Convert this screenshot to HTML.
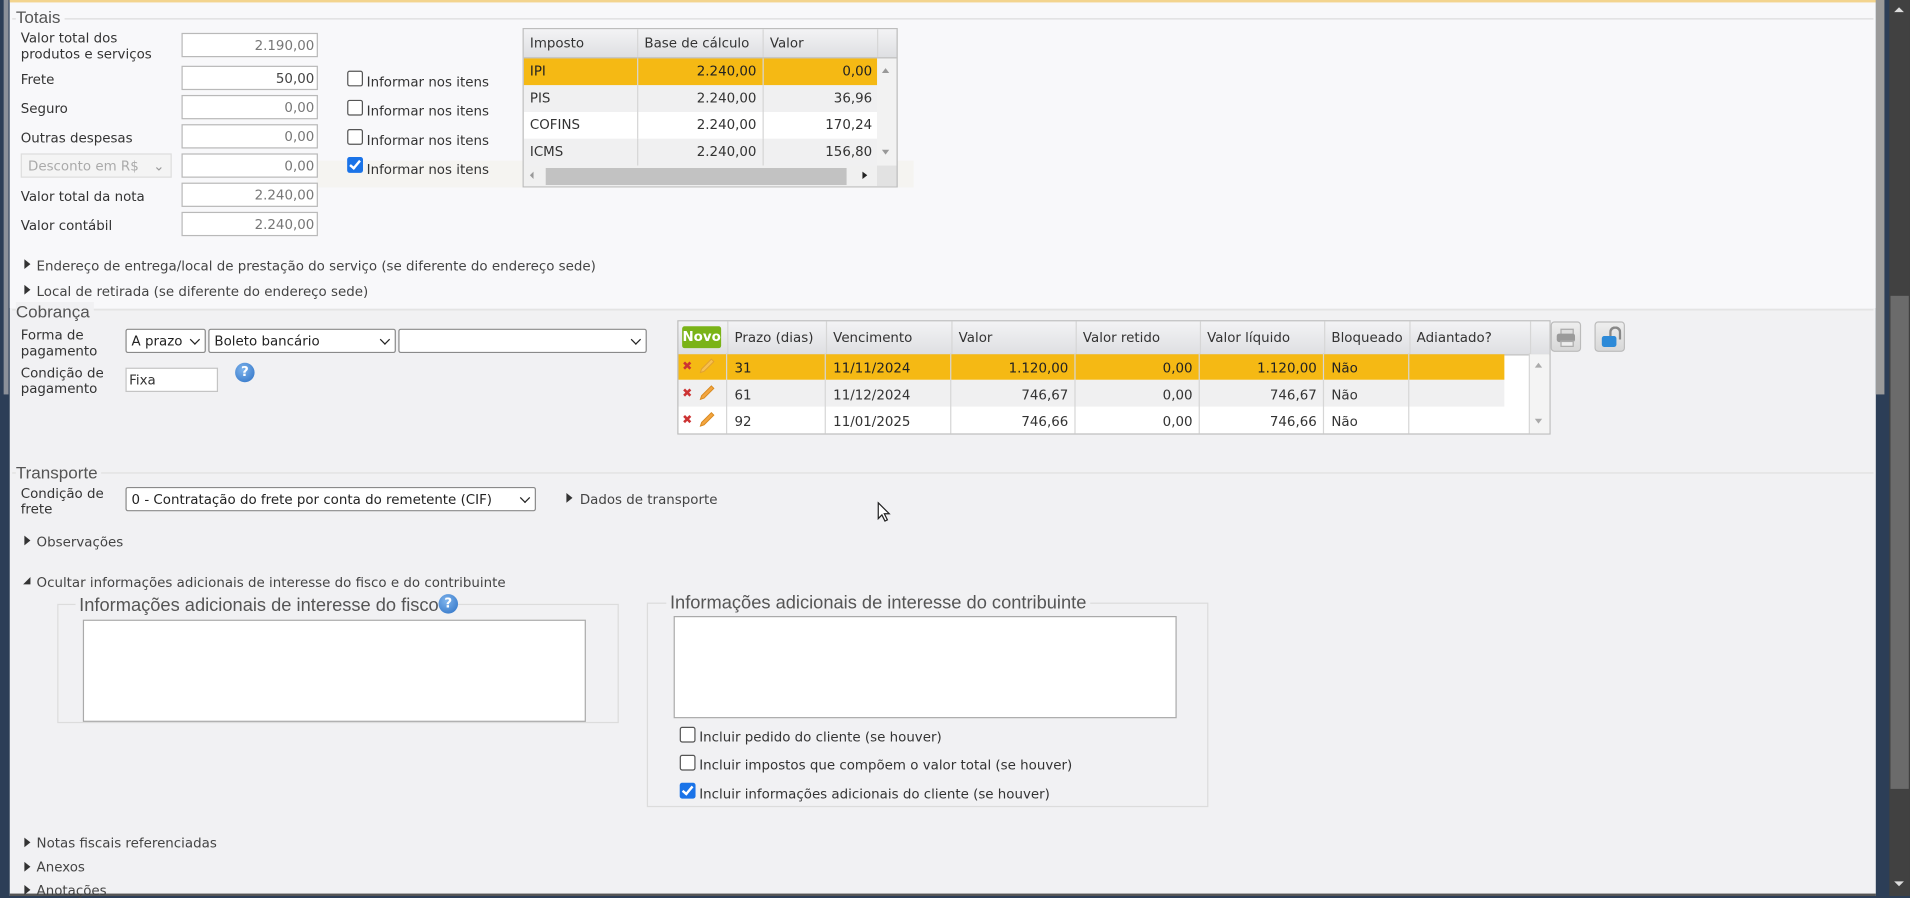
<!DOCTYPE html>
<html><head><meta charset="utf-8"><style>
html,body{margin:0;padding:0;width:1910px;height:896px;overflow:hidden;background:#2c3e57}
#w{position:absolute;left:0;top:0;width:1568px;height:736px;transform:scale(1.21811,1.21739);transform-origin:0 0;font-family:"DejaVu Sans",Verdana,sans-serif;font-size:11px;color:#333}
.a{position:absolute}
.t{position:absolute;white-space:nowrap;line-height:13px;margin-top:1px}
.leg{position:absolute;font-family:"Liberation Sans",sans-serif;font-size:14px;color:#555;white-space:nowrap;background:inherit}
.hl{position:absolute;height:1px;background:#dcdcdc}
.inp{position:absolute;background:#fff;border:1px solid #b9b9b9;box-sizing:border-box;height:20px;text-align:right;padding-right:2px;line-height:19px;color:#777}
.sel{position:absolute;background:#fff;border:1px solid #8a8a8a;border-radius:2px;box-sizing:border-box;height:20px;line-height:19px;padding-left:4px;color:#222;white-space:nowrap;overflow:hidden}
.sel:after{content:"";position:absolute;right:5px;top:5px;width:5px;height:5px;border-right:1.6px solid #222;border-bottom:1.6px solid #222;transform:rotate(45deg)}
.cb{position:absolute;width:11px;height:11px;border:1px solid #555;border-radius:2px;background:#fff}
.cbc{position:absolute;width:13px;height:13px;border-radius:2px;background:#1a73e8}
.cbc:after{content:"";position:absolute;left:4px;top:1px;width:3px;height:7px;border-right:2px solid #fff;border-bottom:2px solid #fff;transform:rotate(40deg)}
.tri{position:absolute;width:0;height:0;border-top:4px solid transparent;border-bottom:4px solid transparent;border-left:5px solid #333}
.lk{position:absolute;white-space:nowrap;color:#444;margin-top:1px}
.cell{position:absolute;box-sizing:border-box;border-right:1px solid #d6d6d6;padding:0 5px;white-space:nowrap;overflow:hidden}
.hdr{background:linear-gradient(#f3f3f5,#dedfe2);border-bottom:1px solid #bdbdbd}
.help{position:absolute;width:16px;height:16px;border-radius:50%;background:radial-gradient(circle at 40% 35%,#7fb4ec,#2a6fc4);color:#fff;font-weight:bold;font-size:11px;line-height:16px;text-align:center}
</style></head><body><div id="w">
<div class="a" style="left:0;top:0;width:3px;height:736px;background:#2c3e57"></div>
<div class="a" style="left:3px;top:0;width:4px;height:324px;background:#8b9099"></div>
<div class="a" style="left:7px;top:0;width:1px;height:736px;background:#2c3e57"></div>
<div class="a" style="left:8px;top:0;width:1532px;height:736px;background:#f1f1f3"></div>
<div class="a" style="left:8px;top:0;width:1532px;height:253px;background:#f8f8fa"></div>
<div class="a" style="left:260px;top:132px;width:490px;height:22px;background:#f5f4f1"></div>
<div class="a" style="left:8px;top:0;width:1532px;height:2px;background:#f3d48e"></div>
<div class="a" style="left:1540px;top:0;width:11px;height:736px;background:#2c3e57"></div>
<div class="a" style="left:1540px;top:0;width:7px;height:324px;background:#9a9a9a"></div>
<div class="a" style="left:1551px;top:0;width:17px;height:736px;background:#414141"></div>
<div class="a" style="left:1552px;top:243px;width:15px;height:405px;background:#6b6b6b"></div>
<div class="a" style="left:1555px;top:6px;width:0;height:0;border-left:4px solid transparent;border-right:4px solid transparent;border-bottom:4px solid #ddd"></div>
<div class="a" style="left:1555px;top:724px;width:0;height:0;border-left:4px solid transparent;border-right:4px solid transparent;border-top:4px solid #ddd"></div>
<div class="a" style="left:8px;top:734px;width:1532px;height:2px;background:#555"></div>

<div class="hl" style="left:10px;top:15px;width:1528px"></div>
<div class="leg" style="left:13px;top:6px;background:#f8f8fa;padding-right:3px">Totais</div>
<div class="t" style="left:17px;top:24px">Valor total dos<br>produtos e serviços</div>
<div class="inp" style="left:149px;top:27px;width:112px">2.190,00</div>
<div class="t" style="left:17px;top:58px">Frete</div>
<div class="inp" style="left:149px;top:54px;width:112px;color:#444">50,00</div>
<div class="t" style="left:17px;top:82px">Seguro</div>
<div class="inp" style="left:149px;top:78px;width:112px">0,00</div>
<div class="t" style="left:17px;top:106px">Outras despesas</div>
<div class="inp" style="left:149px;top:102px;width:112px">0,00</div>
<div class="a" style="left:17px;top:126px;width:124px;height:20px;box-sizing:border-box;border:1px solid #ddd;background:#f4f4f4;color:#aaa;line-height:19px;padding-left:5px">Desconto em R$<span style="position:absolute;right:5px;top:0;color:#999">&#8964;</span></div>
<div class="inp" style="left:149px;top:126px;width:112px">0,00</div>
<div class="t" style="left:17px;top:154px">Valor total da nota</div>
<div class="inp" style="left:149px;top:150px;width:112px">2.240,00</div>
<div class="t" style="left:17px;top:178px">Valor contábil</div>
<div class="inp" style="left:149px;top:174px;width:112px">2.240,00</div>

<div class="cb" style="left:285px;top:58px"></div><div class="t" style="left:301px;top:60px">Informar nos itens</div>
<div class="cb" style="left:285px;top:82px"></div><div class="t" style="left:301px;top:84px">Informar nos itens</div>
<div class="cb" style="left:285px;top:106px"></div><div class="t" style="left:301px;top:108px">Informar nos itens</div>
<div class="cbc" style="left:285px;top:129px"></div><div class="t" style="left:301px;top:132px">Informar nos itens</div>

<div class="a" style="left:429px;top:23px;width:308px;height:131px;border:1px solid #bdbdbd;box-sizing:border-box;background:#f2f2f2;overflow:hidden">
 <div class="a hdr" style="left:0;top:0;width:306px;height:23px"></div>
 <div class="cell" style="left:0;top:0;width:94px;height:23px;line-height:23px">Imposto</div>
 <div class="cell" style="left:94px;top:0;width:103px;height:23px;line-height:23px">Base de cálculo</div>
 <div class="cell" style="left:197px;top:0;width:94px;height:23px;line-height:23px">Valor</div>
 <div class="a" style="left:0;top:24px;width:290px;height:22px;background:#f5b914"></div>
 <div class="a" style="left:0;top:46px;width:290px;height:22px;background:#f0f0f1"></div>
 <div class="a" style="left:0;top:68px;width:290px;height:22px;background:#fff"></div>
 <div class="a" style="left:0;top:90px;width:290px;height:22px;background:#f0f0f1"></div>
 <div class="cell" style="left:0;top:24px;width:94px;line-height:22px;color:#222">IPI</div>
 <div class="cell" style="left:94px;top:24px;width:103px;line-height:22px;text-align:right;color:#222">2.240,00</div>
 <div class="cell" style="left:197px;top:24px;width:94px;line-height:22px;text-align:right;border:0;color:#222">0,00</div>
 <div class="cell" style="left:0;top:46px;width:94px;line-height:22px">PIS</div>
 <div class="cell" style="left:94px;top:46px;width:103px;line-height:22px;text-align:right">2.240,00</div>
 <div class="cell" style="left:197px;top:46px;width:94px;line-height:22px;text-align:right;border:0">36,96</div>
 <div class="cell" style="left:0;top:68px;width:94px;line-height:22px">COFINS</div>
 <div class="cell" style="left:94px;top:68px;width:103px;line-height:22px;text-align:right">2.240,00</div>
 <div class="cell" style="left:197px;top:68px;width:94px;line-height:22px;text-align:right;border:0">170,24</div>
 <div class="cell" style="left:0;top:90px;width:94px;line-height:22px">ICMS</div>
 <div class="cell" style="left:94px;top:90px;width:103px;line-height:22px;text-align:right">2.240,00</div>
 <div class="cell" style="left:197px;top:90px;width:94px;line-height:22px;text-align:right;border:0">156,80</div>
 <div class="a" style="left:294px;top:32px;border-left:3px solid transparent;border-right:3px solid transparent;border-bottom:4px solid #999"></div>
 <div class="a" style="left:294px;top:99px;border-left:3px solid transparent;border-right:3px solid transparent;border-top:4px solid #999"></div>
 <div class="a" style="left:0;top:112px;width:306px;height:18px;background:#f0f0f0"></div>
 <div class="a" style="left:18px;top:114px;width:247px;height:14px;background:#c2c2c2"></div>
 <div class="a" style="left:5px;top:117px;border-top:3px solid transparent;border-bottom:3px solid transparent;border-right:3px solid #999"></div>
 <div class="a" style="left:278px;top:117px;border-top:3px solid transparent;border-bottom:3px solid transparent;border-left:4px solid #222"></div>
 <div class="a" style="left:290px;top:112px;width:16px;height:18px;background:#e2e2e2"></div>
</div>

<div class="tri" style="left:20px;top:213px"></div><div class="lk" style="left:30px;top:211px">Endereço de entrega/local de prestação do serviço (se diferente do endereço sede)</div>
<div class="tri" style="left:20px;top:234px"></div><div class="lk" style="left:30px;top:232px">Local de retirada (se diferente do endereço sede)</div>

<div class="hl" style="left:10px;top:254px;width:1528px;background:#e0e0e0"></div>
<div class="leg" style="left:13px;top:248px;background:#f1f1f3;padding-right:3px">Cobrança</div>
<div class="t" style="left:17px;top:268px">Forma de<br>pagamento</div>
<div class="sel" style="left:103px;top:270px;width:66px">A prazo</div>
<div class="sel" style="left:171px;top:270px;width:154px">Boleto bancário</div>
<div class="sel" style="left:327px;top:270px;width:204px"></div>
<div class="t" style="left:17px;top:299px">Condição de<br>pagamento</div>
<div class="a" style="left:103px;top:302px;width:76px;height:20px;box-sizing:border-box;border:1px solid #c4c4c4;background:#fff;line-height:19px;padding-left:2px">Fixa</div>
<div class="help" style="left:193px;top:298px">?</div>

<div class="a" style="left:556px;top:263px;width:717px;height:94px;border:1px solid #bdbdbd;box-sizing:border-box;background:#fff;overflow:hidden">
 <div class="a hdr" style="left:0;top:0;width:715px;height:27px"></div>
 <div class="a" style="left:3px;top:4px;width:32px;height:18px;border-radius:2px;background:#7ab317;color:#fff;font-weight:bold;font-size:11px;line-height:18px;text-align:center">Novo</div>
 <div class="cell" style="left:0;top:0;width:41px;height:27px"></div>
 <div class="cell" style="left:41px;top:0;width:81px;height:27px;line-height:27px">Prazo (dias)</div>
 <div class="cell" style="left:122px;top:0;width:103px;height:27px;line-height:27px">Vencimento</div>
 <div class="cell" style="left:225px;top:0;width:102px;height:27px;line-height:27px">Valor</div>
 <div class="cell" style="left:327px;top:0;width:102px;height:27px;line-height:27px">Valor retido</div>
 <div class="cell" style="left:429px;top:0;width:102px;height:27px;line-height:27px">Valor líquido</div>
 <div class="cell" style="left:531px;top:0;width:70px;height:27px;line-height:27px">Bloqueado</div>
 <div class="cell" style="left:601px;top:0;width:99px;height:27px;line-height:27px">Adiantado?</div>
 <div class="a" style="left:0;top:27px;width:678px;height:21px;background:#f5b914"></div>
 <div class="a" style="left:0;top:48px;width:678px;height:22px;background:#f0f0f1"></div>
 <div class="a" style="left:699px;top:27px;width:16px;height:66px;background:#f4f4f4"></div>
 <div class="a" style="left:703px;top:34px;border-left:3px solid transparent;border-right:3px solid transparent;border-bottom:4px solid #aaa"></div>
 <div class="a" style="left:703px;top:80px;border-left:3px solid transparent;border-right:3px solid transparent;border-top:4px solid #aaa"></div>
</div>
<div class="a" style="left:556px;top:290px;width:700px;height:66px;line-height:22px">
 <div class="a" style="left:0;top:0;width:700px;height:66px">
  <div class="cell" style="left:0;top:0;width:41px;height:66px"></div>
  <div class="cell" style="left:41px;top:0;width:81px;height:66px"></div>
  <div class="cell" style="left:122px;top:0;width:103px;height:66px"></div>
  <div class="cell" style="left:225px;top:0;width:102px;height:66px"></div>
  <div class="cell" style="left:327px;top:0;width:102px;height:66px"></div>
  <div class="cell" style="left:429px;top:0;width:102px;height:66px"></div>
  <div class="cell" style="left:531px;top:0;width:70px;height:66px"></div>
  <div class="cell" style="left:601px;top:0;width:99px;height:66px"></div>
 </div>
 <div class="a" style="left:4px;top:1px;color:#c33;font-size:10px;font-weight:bold">✖</div>
 <div class="a" style="left:4px;top:23px;color:#c33;font-size:10px;font-weight:bold">✖</div>
 <div class="a" style="left:4px;top:45px;color:#c33;font-size:10px;font-weight:bold">✖</div>
 <svg class="a" style="left:17px;top:4px" width="14" height="14" viewBox="0 0 14 14"><path d="M2 12 L3 9 L11 1 L13 3 L5 11 Z" fill="#f7c050" stroke="#e0a030" stroke-width=".8"/></svg>
 <svg class="a" style="left:17px;top:26px" width="14" height="14" viewBox="0 0 14 14"><path d="M2 12 L3 9 L11 1 L13 3 L5 11 Z" fill="#f3a540" stroke="#d88a20" stroke-width=".8"/></svg>
 <svg class="a" style="left:17px;top:48px" width="14" height="14" viewBox="0 0 14 14"><path d="M2 12 L3 9 L11 1 L13 3 L5 11 Z" fill="#f3a540" stroke="#d88a20" stroke-width=".8"/></svg>
 <div class="t" style="left:47px;top:5px;color:#222">31</div>
 <div class="t" style="left:128px;top:5px;color:#222">11/11/2024</div>
 <div class="t" style="left:225px;top:5px;width:96px;text-align:right;color:#222">1.120,00</div>
 <div class="t" style="left:327px;top:5px;width:96px;text-align:right;color:#222">0,00</div>
 <div class="t" style="left:429px;top:5px;width:96px;text-align:right;color:#222">1.120,00</div>
 <div class="t" style="left:537px;top:5px;color:#222">Não</div>
 <div class="t" style="left:47px;top:27px">61</div>
 <div class="t" style="left:128px;top:27px">11/12/2024</div>
 <div class="t" style="left:225px;top:27px;width:96px;text-align:right">746,67</div>
 <div class="t" style="left:327px;top:27px;width:96px;text-align:right">0,00</div>
 <div class="t" style="left:429px;top:27px;width:96px;text-align:right">746,67</div>
 <div class="t" style="left:537px;top:27px">Não</div>
 <div class="t" style="left:47px;top:49px">92</div>
 <div class="t" style="left:128px;top:49px">11/01/2025</div>
 <div class="t" style="left:225px;top:49px;width:96px;text-align:right">746,66</div>
 <div class="t" style="left:327px;top:49px;width:96px;text-align:right">0,00</div>
 <div class="t" style="left:429px;top:49px;width:96px;text-align:right">746,66</div>
 <div class="t" style="left:537px;top:49px">Não</div>
</div>
<div class="a" style="left:1273px;top:264px;width:25px;height:25px;box-sizing:border-box;border:1px solid #bbb;border-radius:3px;background:linear-gradient(#eee,#d8d8d8)">
 <div class="a" style="left:7px;top:5px;width:9px;height:4px;background:#ddd;border:1px solid #aaa"></div>
 <div class="a" style="left:4px;top:9px;width:15px;height:7px;background:#9a9a9a;border-radius:2px"></div>
 <div class="a" style="left:7px;top:15px;width:9px;height:3px;background:#eee;border:1px solid #aaa"></div>
</div>
<div class="a" style="left:1309px;top:264px;width:25px;height:25px;box-sizing:border-box;border:1px solid #bbb;border-radius:3px;background:linear-gradient(#eee,#d8d8d8)">
 <div class="a" style="left:11px;top:3px;width:6px;height:9px;border:2px solid #888;border-bottom:0;border-radius:5px 5px 0 0"></div>
 <div class="a" style="left:5px;top:11px;width:12px;height:9px;background:#2d8ad8;border-radius:2px"></div>
</div>

<div class="hl" style="left:10px;top:388px;width:1528px;background:#e0e0e0"></div>
<div class="leg" style="left:13px;top:380px;background:#f1f1f3;padding-right:3px">Transporte</div>
<div class="t" style="left:17px;top:398px">Condição de<br>frete</div>
<div class="sel" style="left:103px;top:400px;width:337px">0 - Contratação do frete por conta do remetente (CIF)</div>
<div class="tri" style="left:465px;top:405px"></div><div class="lk" style="left:476px;top:403px">Dados de transporte</div>
<svg class="a" style="left:720px;top:412px" width="12" height="18" viewBox="0 0 12 18"><path d="M1 1 L1 14 L4 11 L6.5 16 L8.5 15 L6 10 L10 10 Z" fill="#fff" stroke="#222" stroke-width="1"/></svg>

<div class="tri" style="left:20px;top:440px"></div><div class="lk" style="left:30px;top:438px">Observações</div>
<div class="a" style="left:19px;top:474px;border-left:6px solid transparent;border-bottom:6px solid #333"></div>
<div class="lk" style="left:30px;top:471px">Ocultar informações adicionais de interesse do fisco e do contribuinte</div>

<div class="a" style="left:47px;top:496px;width:461px;height:98px;border:1px solid #dcdcdc;box-sizing:border-box"></div>
<div class="leg" style="left:62px;top:489px;background:#f1f1f3;padding:0 3px;font-size:15px">Informações adicionais de interesse do fisco</div>
<div class="help" style="left:360px;top:488px">?</div>
<div class="a" style="left:68px;top:509px;width:413px;height:84px;background:#fff;border:1px solid #aaa;box-sizing:border-box"></div>
<div class="a" style="left:531px;top:495px;width:461px;height:168px;border:1px solid #dcdcdc;box-sizing:border-box"></div>
<div class="leg" style="left:547px;top:487px;background:#f1f1f3;padding:0 3px;font-size:15px">Informações adicionais de interesse do contribuinte</div>
<div class="a" style="left:553px;top:506px;width:413px;height:84px;background:#fff;border:1px solid #aaa;box-sizing:border-box"></div>
<div class="cb" style="left:558px;top:597px"></div><div class="t" style="left:574px;top:598px">Incluir pedido do cliente (se houver)</div>
<div class="cb" style="left:558px;top:620px"></div><div class="t" style="left:574px;top:621px">Incluir impostos que compõem o valor total (se houver)</div>
<div class="cbc" style="left:558px;top:643px"></div><div class="t" style="left:574px;top:645px">Incluir informações adicionais do cliente (se houver)</div>

<div class="tri" style="left:20px;top:688px"></div><div class="lk" style="left:30px;top:685px">Notas fiscais referenciadas</div>
<div class="tri" style="left:20px;top:708px"></div><div class="lk" style="left:30px;top:705px">Anexos</div>
<div class="tri" style="left:20px;top:727px"></div><div class="lk" style="left:30px;top:724px">Anotações</div>
</div></body></html>
